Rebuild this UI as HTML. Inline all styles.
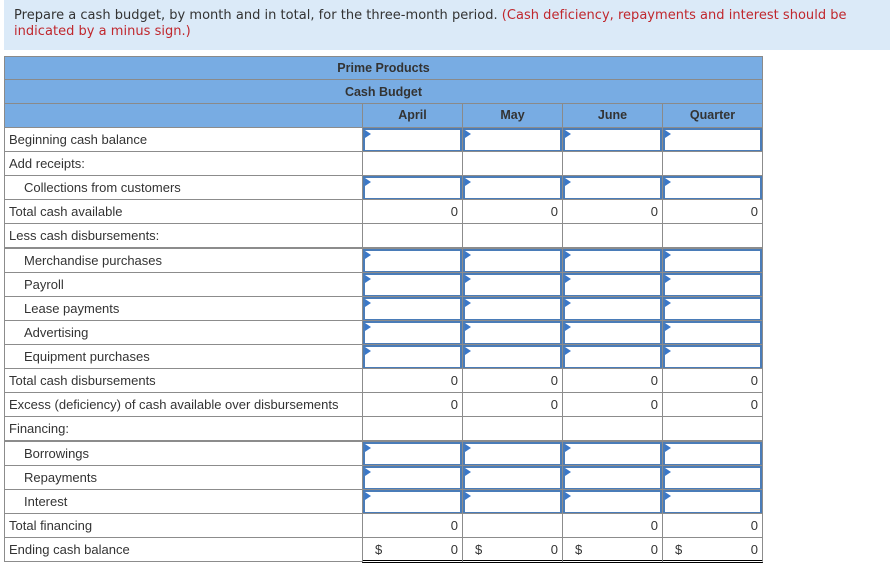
<!DOCTYPE html>
<html><head><meta charset="utf-8"><style>
body{margin:0;width:893px;height:565px;background:#fff;position:relative;overflow:hidden;font-family:"Liberation Sans",Arial,sans-serif;font-size:13px;color:#333}
.ins{position:absolute;left:4px;top:0;width:886px;height:50px;background:#dbeaf8;font-family:"DejaVu Sans",Verdana,sans-serif;font-size:13px;line-height:16px;color:#333;box-sizing:border-box;padding:8px 10px;letter-spacing:0.02px}
.ins span{color:#c0272d}
.h{position:absolute;background:#78ace3;border:1px solid #8a8a8a;box-sizing:border-box;font-weight:bold;font-size:12.5px;color:#333;text-align:center;line-height:22px}
.c{position:absolute;box-sizing:border-box;border:1px solid #8c8c8c;height:25px;line-height:24px;padding:0 4px}
.in{position:absolute;box-sizing:border-box;border:2px solid #4a7cb8;height:24px}
.in:before{content:"";position:absolute;left:0;top:0;border-left:6px solid #3b78c8;border-top:4px solid transparent;border-bottom:4px solid transparent;}
.r{text-align:right}
.bk{border-bottom:1px solid #000}
</style></head><body>
<div class="ins">Prepare a cash budget, by month and in total, for the three-month period. <span>(Cash deficiency, repayments and interest should be indicated by a minus sign.)</span></div>
<div class="h" style="left:4px;top:56px;width:759px;height:24px">Prime Products</div>
<div class="h" style="left:4px;top:79px;width:759px;height:25px;line-height:24px">Cash Budget</div>
<div class="h" style="left:4px;top:103px;width:359px;height:25px"></div>
<div class="h" style="left:362px;top:103px;width:101px;height:25px">April</div>
<div class="h" style="left:462px;top:103px;width:101px;height:25px">May</div>
<div class="h" style="left:562px;top:103px;width:101px;height:25px">June</div>
<div class="h" style="left:662px;top:103px;width:101px;height:25px">Quarter</div>
<div id="rows"></div>
<script>
var R=[["Beginning cash balance",0,"i"],["Add receipts:",0,"b"],["Collections from customers",1,"i"],["Total cash available",0,"z"],["Less cash disbursements:",0,"b"],["Merchandise purchases",1,"i"],["Payroll",1,"i"],["Lease payments",1,"i"],["Advertising",1,"i"],["Equipment purchases",1,"i"],["Total cash disbursements",0,"z"],["Excess (deficiency) of cash available over disbursements",0,"z"],["Financing:",0,"b"],["Borrowings",1,"i"],["Repayments",1,"i"],["Interest",1,"i"],["Total financing",0,"f"],["Ending cash balance",0,"d"]];
var h="";
R.forEach(function(r,i){var t=Math.round(127+24.12*i);
h+='<div class="c" style="left:4px;top:'+t+'px;width:359px;padding-left:'+(r[1]?19:4)+'px">'+r[0]+'</div>';
for(var k=0;k<4;k++){var l=362+100*k;
if(r[2]=="i"){h+='<div class="c" style="left:'+l+'px;top:'+t+'px;width:101px"></div><div class="in" style="left:'+(l+1)+'px;top:'+(t+1)+'px;width:99px"></div>';}
else if(r[2]=="b"){h+='<div class="c" style="left:'+l+'px;top:'+t+'px;width:101px"></div>';}
else if(r[2]=="z"||r[2]=="f"){var v=(r[2]=="f"&&k==1)?"":"0";h+='<div class="c r bk" style="left:'+l+'px;top:'+t+'px;width:101px">'+v+'</div>';}
else{h+='<div class="c r bk" style="left:'+l+'px;top:'+t+'px;width:101px;border-bottom:3px double #000;height:26px"><span style="float:left;padding-left:8px">$</span>0</div>';}
}});
document.getElementById("rows").innerHTML=h;
</script>
</body></html>
